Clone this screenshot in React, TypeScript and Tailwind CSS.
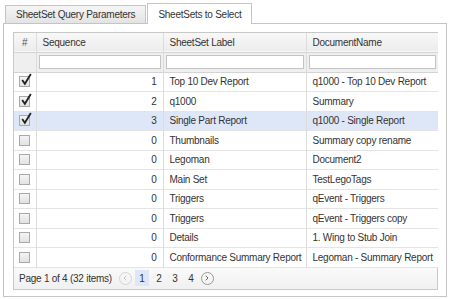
import { ChevronLeft, ChevronRight } from "lucide-react";

type Row = { checked: boolean; seq: number; label: string; doc: string; selected?: boolean };

const rows: Row[] = [
  { checked: true, seq: 1, label: "Top 10 Dev Report", doc: "q1000 - Top 10 Dev Report" },
  { checked: true, seq: 2, label: "q1000", doc: "Summary" },
  { checked: true, seq: 3, label: "Single Part Report", doc: "q1000 - Single Report", selected: true },
  { checked: false, seq: 0, label: "Thumbnails", doc: "Summary copy rename" },
  { checked: false, seq: 0, label: "Legoman", doc: "Document2" },
  { checked: false, seq: 0, label: "Main Set", doc: "TestLegoTags" },
  { checked: false, seq: 0, label: "Triggers", doc: "qEvent - Triggers" },
  { checked: false, seq: 0, label: "Triggers", doc: "qEvent - Triggers copy" },
  { checked: false, seq: 0, label: "Details", doc: "1. Wing to Stub Join" },
  { checked: false, seq: 0, label: "Conformance Summary Report", doc: "Legoman - Summary Report" },
];

function CheckBox({ checked }: { checked: boolean }) {
  return (
    <div className="relative w-[11px] h-[11px] border border-[#a9a9a9] bg-gradient-to-b from-[#f4f4f4] to-[#e2e2e2] mx-auto">
      {checked && (
        <svg className="absolute -top-[4px] left-[0px]" width="13" height="13" viewBox="0 0 12 12">
          <path d="M2 6.5 L4.5 10 L10 1" fill="none" stroke="#222" strokeWidth="1.7" />
        </svg>
      )}
    </div>
  );
}

export default function App() {
  const cell = "border-r border-[#dcdcdc] px-[6px] whitespace-nowrap overflow-hidden";
  return (
    <div className="w-[451px] h-[299px] bg-white text-[10px] tracking-[-0.25px] text-[#333] font-['Liberation_Sans',Arial,sans-serif] pt-[2px] pl-[3px] pr-[4px]">
      {/* Tabs */}
      <div className="flex items-end h-[21px] pl-[2px]">
        <div className="h-[18px] px-[10px] flex items-center border border-[#c4c4c4] border-b-0 bg-gradient-to-b from-[#f6f6f6] to-[#e3e3e3]">
          SheetSet Query Parameters
        </div>
        <div className="h-[21px] ml-[1px] px-[10px] flex items-center border border-[#c4c4c4] border-b-0 bg-white relative top-[1px]">
          SheetSets to Select
        </div>
      </div>

      {/* Panel */}
      <div className="border border-[#c4c4c4] h-[274px] pt-[8px] pl-[9px] pr-[8px]">
        <div className="border border-[#c8c8c8]">
          <table className="w-[424px] table-fixed border-collapse">
            <colgroup>
              <col className="w-[22px]" />
              <col className="w-[127px]" />
              <col className="w-[143px]" />
              <col />
            </colgroup>
            <thead>
              <tr className="h-[19px] bg-gradient-to-b from-[#f8f8f8] to-[#ececec] border-b border-[#d4d4d4] text-left">
                <th className={`${cell} font-normal text-center text-[#555]`}>#</th>
                <th className={`${cell} font-normal`}>Sequence</th>
                <th className={`${cell} font-normal`}>SheetSet Label</th>
                <th className={`${cell} font-normal border-r-0`}>DocumentName</th>
              </tr>
              <tr className="h-[20px] bg-[#efefef] border-b border-[#d4d4d4]">
                <td className="border-r border-[#dcdcdc]"></td>
                <td className="border-r border-[#dcdcdc] px-[2px]">
                  <div className="h-[14px] border border-[#c4c4c4] bg-white" />
                </td>
                <td className="border-r border-[#dcdcdc] px-[2px]">
                  <div className="h-[14px] border border-[#c4c4c4] bg-white" />
                </td>
                <td className="px-[2px]">
                  <div className="h-[14px] border border-[#c4c4c4] bg-white" />
                </td>
              </tr>
            </thead>
            <tbody>
              {rows.map((r, i) => (
                <tr
                  key={i}
                  className={`h-[19.5px] border-b border-[#e4e4e4] ${r.selected ? "bg-[#dde7f8]" : "bg-white"}`}
                >
                  <td className="border-r border-[#dcdcdc]">
                    <CheckBox checked={r.checked} />
                  </td>
                  <td className={`${cell} text-right`}>{r.seq}</td>
                  <td className={cell}>{r.label}</td>
                  <td className={`${cell} border-r-0`}>{r.doc}</td>
                </tr>
              ))}
            </tbody>
          </table>
          {/* Pager */}
          <div className="h-[21px] flex items-center pl-[5px] bg-gradient-to-b from-[#fafafa] to-[#f0f0f0]">
            <span>Page 1 of 4 (32 items)</span>
            <div className="ml-[7px] w-[13px] h-[13px] rounded-full border border-[#d4d4d4] flex items-center justify-center text-[#c8c8c8]">
              <ChevronLeft size={8} strokeWidth={3} />
            </div>
            <div className="ml-[3px] w-[14px] h-[16px] bg-[#dde7f8] flex items-center justify-center">1</div>
            <div className="ml-[4px] w-[12px] text-center">2</div>
            <div className="ml-[4px] w-[12px] text-center">3</div>
            <div className="ml-[4px] w-[12px] text-center">4</div>
            <div className="ml-[4px] w-[13px] h-[13px] rounded-full border border-[#9a9a9a] flex items-center justify-center text-[#666]">
              <ChevronRight size={8} strokeWidth={3} />
            </div>
          </div>
        </div>
      </div>
    </div>
  );
}
